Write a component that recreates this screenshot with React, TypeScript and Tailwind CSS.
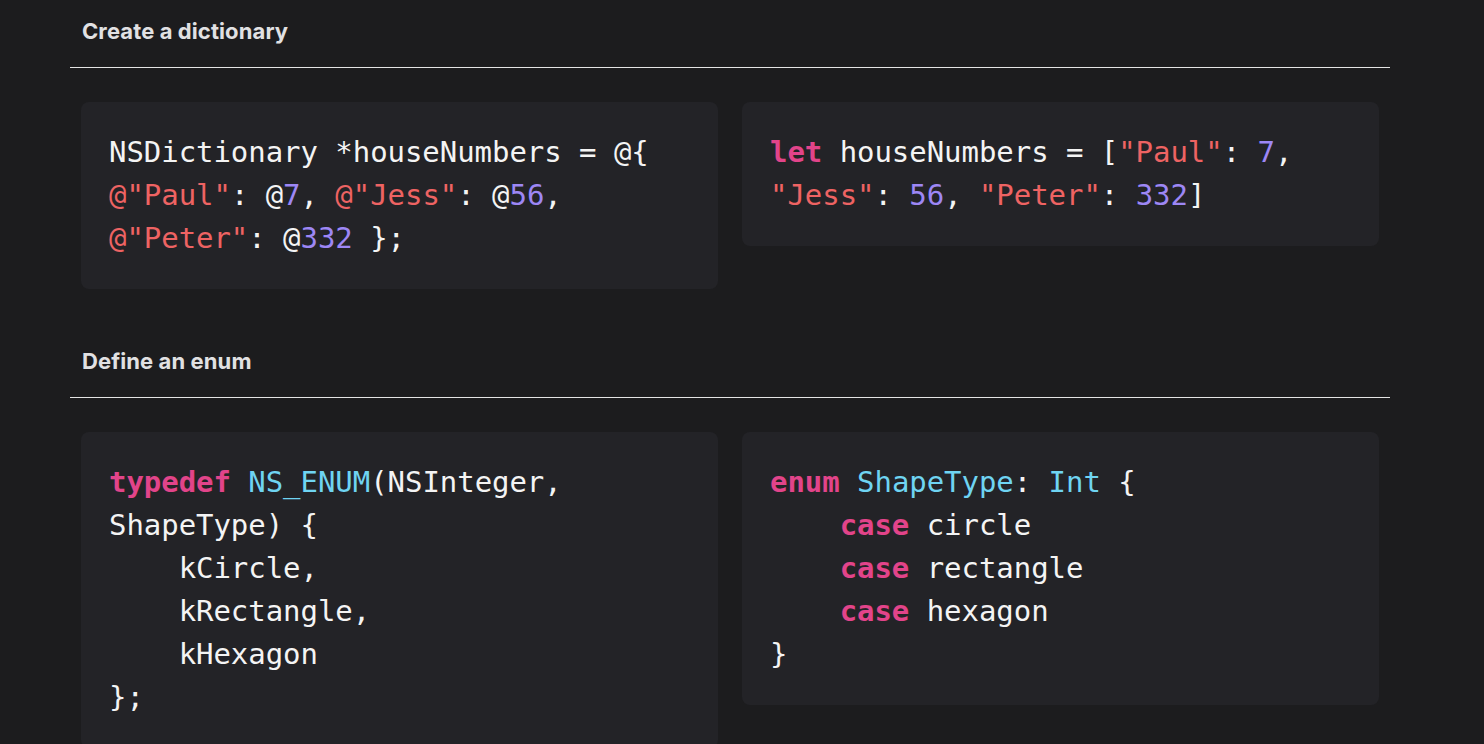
import React from 'react';

type Tok = { t: string; c?: 'kw' | 'str' | 'num' | 'type' };

const colorOf: Record<string, string> = {
  kw: 'text-[#e2448a] font-bold',
  str: 'text-[#ee6363]',
  num: 'text-[#9d87f5]',
  type: 'text-[#6fd4f2]',
};

const CodeCard = ({ lines }: { lines: Tok[][] }) => (
  <div className="bg-[#232327] rounded-lg px-7 pt-[29px] pb-[29px]">
    <pre className="font-['DejaVu_Sans_Mono',monospace] text-[29px] leading-[43px] text-[#f4f4f4] tracking-[-0.05px]">
      {lines.map((line, i) => (
        <div key={i}>
          {line.map((tok, j) => (
            <span key={j} className={tok.c ? colorOf[tok.c] : ''}>
              {tok.t}
            </span>
          ))}
          {line.length === 0 && ' '}
        </div>
      ))}
    </pre>
  </div>
);

const Section = ({ title, left, right, first }: { title: string; left: Tok[][]; right: Tok[][]; first?: boolean }) => (
  <section className={first ? 'pt-[17px]' : 'pt-[58px]'}>
    <h2 className="px-3 pb-[22px] text-[22px] leading-[28px] font-bold tracking-[0.1px] text-[#e1e1e3] font-['Inter',sans-serif]">
      {title}
    </h2>
    <div className="border-t border-[#e4e4e4]" />
    <div className="grid grid-cols-2 gap-6 px-[11px] pt-[34px] items-start">
      <CodeCard lines={left} />
      <CodeCard lines={right} />
    </div>
  </section>
);

const dictObjc: Tok[][] = [
  [{ t: 'NSDictionary *houseNumbers = @{' }],
  [
    { t: '@"Paul"', c: 'str' },
    { t: ': @' },
    { t: '7', c: 'num' },
    { t: ', ' },
    { t: '@"Jess"', c: 'str' },
    { t: ': @' },
    { t: '56', c: 'num' },
    { t: ',' },
  ],
  [{ t: '@"Peter"', c: 'str' }, { t: ': @' }, { t: '332', c: 'num' }, { t: ' };' }],
];

const dictSwift: Tok[][] = [
  [
    { t: 'let', c: 'kw' },
    { t: ' houseNumbers = [' },
    { t: '"Paul"', c: 'str' },
    { t: ': ' },
    { t: '7', c: 'num' },
    { t: ',' },
  ],
  [
    { t: '"Jess"', c: 'str' },
    { t: ': ' },
    { t: '56', c: 'num' },
    { t: ', ' },
    { t: '"Peter"', c: 'str' },
    { t: ': ' },
    { t: '332', c: 'num' },
    { t: ']' },
  ],
];

const enumObjc: Tok[][] = [
  [{ t: 'typedef', c: 'kw' }, { t: ' ' }, { t: 'NS_ENUM', c: 'type' }, { t: '(NSInteger,' }],
  [{ t: 'ShapeType) {' }],
  [{ t: '    kCircle,' }],
  [{ t: '    kRectangle,' }],
  [{ t: '    kHexagon' }],
  [{ t: '};' }],
];

const enumSwift: Tok[][] = [
  [
    { t: 'enum', c: 'kw' },
    { t: ' ' },
    { t: 'ShapeType', c: 'type' },
    { t: ': ' },
    { t: 'Int', c: 'type' },
    { t: ' {' },
  ],
  [{ t: '    ' }, { t: 'case', c: 'kw' }, { t: ' circle' }],
  [{ t: '    ' }, { t: 'case', c: 'kw' }, { t: ' rectangle' }],
  [{ t: '    ' }, { t: 'case', c: 'kw' }, { t: ' hexagon' }],
  [{ t: '}' }],
];

export default function App() {
  return (
    <div className="min-h-screen bg-[#1c1c1e]">
      <div className="w-[1320px] ml-[70px] pb-10">
        <Section first title="Create a dictionary" left={dictObjc} right={dictSwift} />
        <Section title="Define an enum" left={enumObjc} right={enumSwift} />
      </div>
    </div>
  );
}
